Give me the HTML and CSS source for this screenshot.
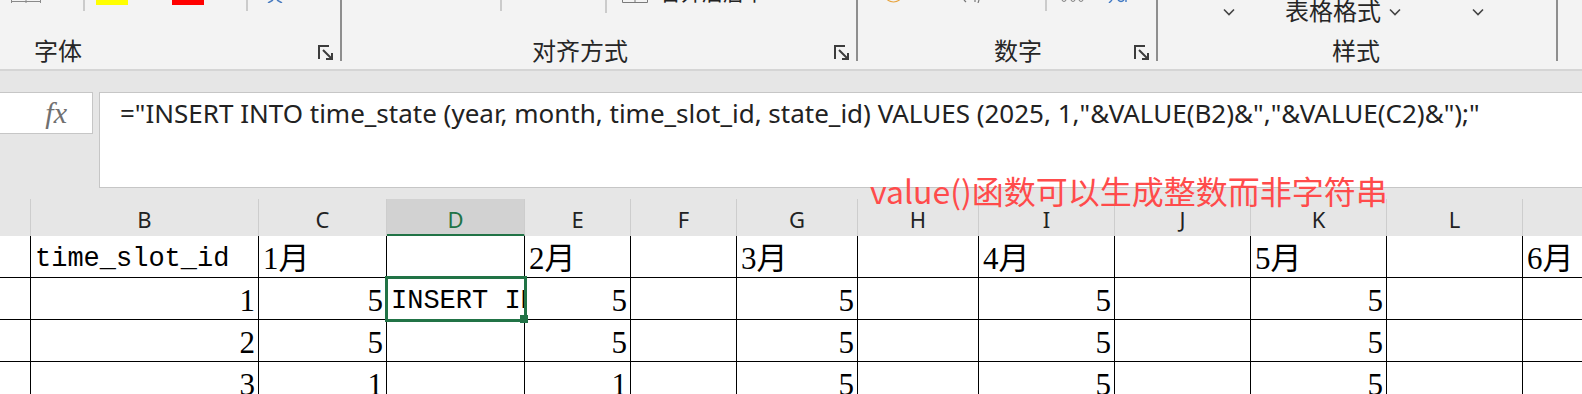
FILE: index.html
```html
<!DOCTYPE html>
<html lang="zh-CN">
<head>
    <meta charset="UTF-8">
    <meta name="viewport" content="width=device-width, initial-scale=1.0">
    <title>time_state - Excel</title>
    <link rel="stylesheet" href="styles.css">
</head>
<body>
    <!-- ribbon, scrolled so only the bottom of the tool rows shows -->
    <div class="ribbon">
        <div class="group g-font">
            <div class="tools">
                <svg class="t-border" width="30" height="3" viewBox="0 0 30 3"><path d="M0 1.5H30M0.5 0V3M15 0V3M29.5 0V3" stroke="#8a8a8a" stroke-width="1" fill="none"/></svg>
                <span class="tsep ts-1"></span>
                <span class="swatch yellow"></span>
                <span class="swatch red"></span>
                <span class="tsep ts-2"></span>
                <svg class="t-wen" width="16" height="3" viewBox="0 0 16 3"><path d="M1 3L6 0M10 0L15 3" stroke="#4a7cc0" stroke-width="1.5" fill="none"/></svg>
            </div>
            <div class="glabel">
                <span>字体</span>
                <svg class="launcher" width="16" height="16" viewBox="0 0 16 16"><path d="M1 14V1H11M5 5L14 14M8 14H14V8" stroke="#3c3c3c" stroke-width="2" fill="none"/></svg>
            </div>
        </div>
        <div class="group g-align">
            <div class="tools">
                <span class="tsep ts-3"></span>
                <span class="tsep ts-4"></span>
                <svg class="t-merge" width="26" height="3" viewBox="0 0 26 3"><path d="M0.5 0V2.5H25.5V0M13 0V2.5" stroke="#7a7a7a" stroke-width="1" fill="none"/></svg>
                <span class="t-text">合并后居中</span>
            </div>
            <div class="glabel">
                <span>对齐方式</span>
                <svg class="launcher" width="16" height="16" viewBox="0 0 16 16"><path d="M1 14V1H11M5 5L14 14M8 14H14V8" stroke="#3c3c3c" stroke-width="2" fill="none"/></svg>
            </div>
        </div>
        <div class="group g-number">
            <div class="tools">
                <svg class="t-coin" width="13" height="3" viewBox="0 0 13 3"><path d="M0.5 0Q6.5 4 12.5 0" stroke="#e8a33c" stroke-width="1.2" fill="none"/></svg>
                <svg class="t-pct" width="17" height="3" viewBox="0 0 17 3"><path d="M1 0L3 2M12 0V2M16 0L15 3" stroke="#777" stroke-width="1.2" fill="none"/></svg>
                <span class="tsep ts-5"></span>
                <svg class="t-dec" width="27" height="3" viewBox="0 0 27 3"><path d="M2 0Q4 3 6 0M11 0Q13 3 15 0M19 0Q21 3 23 0" stroke="#888" stroke-width="1.2" fill="none"/></svg>
                <svg class="t-dec2" width="22" height="3" viewBox="0 0 22 3"><path d="M1 3L4 0M10 0Q13 3 16 0M18 0V2" stroke="#3f78c4" stroke-width="1.4" fill="none"/></svg>
            </div>
            <div class="glabel">
                <span>数字</span>
                <svg class="launcher" width="16" height="16" viewBox="0 0 16 16"><path d="M1 14V1H11M5 5L14 14M8 14H14V8" stroke="#3c3c3c" stroke-width="2" fill="none"/></svg>
            </div>
        </div>
        <div class="group g-style">
            <div class="tools">
                <svg class="chev ch-1" width="12" height="8" viewBox="0 0 12 8"><path d="M1 1.5L6 6.5L11 1.5" stroke="#444" stroke-width="1.6" fill="none"/></svg>
                <span class="t-table">表格格式</span>
                <svg class="chev ch-2" width="12" height="8" viewBox="0 0 12 8"><path d="M1 1.5L6 6.5L11 1.5" stroke="#444" stroke-width="1.6" fill="none"/></svg>
                <svg class="chev ch-3" width="12" height="8" viewBox="0 0 12 8"><path d="M1 1.5L6 6.5L11 1.5" stroke="#444" stroke-width="1.6" fill="none"/></svg>
            </div>
            <div class="glabel">
                <span>样式</span>
            </div>
        </div>
        <div class="group g-rest"></div>
    </div>

    <div class="formula-bar">
        <div class="fx-box"><span class="fx">fx</span></div>
        <div class="formula-input">="INSERT INTO time_state (year, month, time_slot_id, state_id) VALUES (2025, 1,"&amp;VALUE(B2)&amp;","&amp;VALUE(C2)&amp;");"</div>
    </div>

    <div class="note">value()函数可以生成整数而非字符串</div>

    <div class="sheet">
        <div class="colhead">
            <span></span><span>B</span><span>C</span><span class="sel">D</span><span>E</span><span>F</span><span>G</span><span>H</span><span>I</span><span>J</span><span>K</span><span>L</span><span>M</span>
        </div>
        <div class="row">
            <div></div>
            <div class="mono">time_slot_id</div>
            <div>1月</div>
            <div></div>
            <div>2月</div>
            <div></div>
            <div>3月</div>
            <div></div>
            <div>4月</div>
            <div></div>
            <div>5月</div>
            <div></div>
            <div>6月</div>
        </div>
        <div class="row">
            <div></div>
            <div class="num">1</div>
            <div class="num">5</div>
            <div class="active"><span class="clip">INSERT INTO</span></div>
            <div class="num">5</div>
            <div></div>
            <div class="num">5</div>
            <div></div>
            <div class="num">5</div>
            <div></div>
            <div class="num">5</div>
            <div></div>
            <div></div>
        </div>
        <div class="row">
            <div></div>
            <div class="num">2</div>
            <div class="num">5</div>
            <div></div>
            <div class="num">5</div>
            <div></div>
            <div class="num">5</div>
            <div></div>
            <div class="num">5</div>
            <div></div>
            <div class="num">5</div>
            <div></div>
            <div></div>
        </div>
        <div class="row">
            <div></div>
            <div class="num">3</div>
            <div class="num">1</div>
            <div></div>
            <div class="num">1</div>
            <div></div>
            <div class="num">5</div>
            <div></div>
            <div class="num">5</div>
            <div></div>
            <div class="num">5</div>
            <div></div>
            <div></div>
        </div>
    </div>
</body>
</html>
```

FILE: styles.css
```css
body {
    margin: 0;
    width: 1582px;
    height: 394px;
    overflow: hidden;
    background-color: #e6e6e6;
    font-family: "Noto Sans", "Noto Sans CJK SC", sans-serif;
    color: #222;
}

/* ribbon */
.ribbon {
    display: flex;
    align-items: flex-start;
    height: 69px;
    background-color: #f3f3f3;
    border-bottom: 2px solid #d5d5d5;
    overflow: hidden;
}

.group {
    flex: none;
    display: flex;
    flex-direction: column;
    height: 61px;
    box-sizing: border-box;
    border-right: 2px solid #8e8e8e;
}

.g-font { width: 342px; }
.g-align { width: 516px; }
.g-number { width: 300px; }
.g-style { width: 400px; }
.g-rest { flex: 1; border-right: none; }

.tools {
    display: flex;
    align-items: flex-start;
    height: 38px;
    flex: none;
}

.glabel {
    display: flex;
    align-items: flex-start;
    height: 23px;
    font-family: "Noto Sans CJK SC", sans-serif;
    font-size: 24px;
    line-height: 24px;
    color: #262626;
}

.g-font .glabel { padding-left: 34px; }
.g-align .glabel { padding-left: 190px; }
.g-number .glabel { padding-left: 136px; }
.g-style .glabel { padding-left: 174px; }

.launcher {
    margin-left: auto;
    margin-right: 6px;
    margin-top: 7px;
}

.tsep {
    width: 2px;
    height: 11px;
    background-color: #cbcbcb;
}

.swatch {
    width: 32px;
    height: 5px;
}
.yellow { background-color: #ffff00; margin-left: 11px; }
.red { background-color: #ff0000; margin-left: 44px; }

.t-border { margin-left: 11px; }
.ts-1 { margin-left: 42px; }
.ts-2 { margin-left: 42px; }
.t-wen { margin-left: 19px; }

.ts-3 { margin-left: 158px; }
.ts-4 { margin-left: 103px; height: 13px; }
.t-merge { margin-left: 15px; }
.t-text {
    margin-left: 12px;
    margin-top: -19px;
    font-family: "Noto Sans CJK SC", sans-serif;
    font-size: 21px;
    line-height: 21px;
}

.t-coin { margin-left: 29px; }
.t-pct { margin-left: 63px; }
.ts-5 { margin-left: 65px; }
.t-dec { margin-left: 13px; }
.t-dec2 { margin-left: 21px; }

.chev { margin-top: 8px; }
.ch-1 { margin-left: 65px; }
.t-table {
    margin-left: 50px;
    margin-top: -2px;
    font-family: "Noto Sans CJK SC", sans-serif;
    font-size: 24px;
    line-height: 24px;
    color: #262626;
}
.ch-2 { margin-left: 8px; }
.ch-3 { margin-left: 71px; }

/* formula bar */
.formula-bar {
    display: flex;
    align-items: flex-start;
    gap: 6px;
    height: 128px;
    padding-top: 21px;
    box-sizing: border-box;
}

.fx-box {
    flex: none;
    width: 94px;
    height: 42px;
    margin-left: -1px;
    box-sizing: border-box;
    background-color: #fff;
    border: 1px solid #c6c6c6;
    display: flex;
    align-items: center;
    justify-content: flex-end;
    padding-right: 25px;
}

.fx {
    font-family: "Liberation Serif", serif;
    font-style: italic;
    font-size: 30px;
    line-height: 30px;
    color: #707070;
}

.formula-input {
    flex: 1;
    height: 96px;
    box-sizing: border-box;
    background-color: #fff;
    border: 1px solid #c6c6c6;
    border-right: none;
    padding: 3px 0 0 20px;
    font-family: "Noto Sans", sans-serif;
    font-size: 26px;
    line-height: 35px;
    color: #222;
    white-space: nowrap;
    overflow: hidden;
}

.note {
    position: absolute;
    left: 870px;
    top: 174px;
    font-family: "Noto Sans CJK SC", sans-serif;
    font-size: 32px;
    line-height: 32px;
    color: #ff4b4b;
    white-space: nowrap;
}

/* sheet grid */
.sheet {
    --cols: 31px 228px 128px 138px 106px 106px 121px 121px 136px 136px 136px 136px 136px;
}

.colhead {
    display: grid;
    grid-template-columns: var(--cols);
    height: 37px;
}

.colhead span {
    box-sizing: border-box;
    border-right: 1px solid #cdcdcd;
    border-bottom: 1px solid #a9a9a9;
    padding-top: 6px;
    text-align: center;
    font-size: 22px;
    line-height: 29px;
    color: #222;
}

.colhead .sel {
    background-color: #d2d2d2;
    color: #217346;
    border-bottom: 3px solid #217346;
}

.row {
    display: grid;
    grid-template-columns: var(--cols);
    height: 42px;
}

.row > div {
    min-width: 0;
    box-sizing: border-box;
    display: flex;
    align-items: flex-end;
    padding: 0 4px 2px;
    background-color: #fff;
    border-right: 1px solid #000;
    border-bottom: 1px solid #000;
    font-family: "Liberation Serif", "Noto Sans CJK SC", serif;
    font-size: 31px;
    line-height: 32px;
    color: #000;
    white-space: nowrap;
    overflow: hidden;
}

.row > .num {
    justify-content: flex-end;
    padding-right: 3px;
}

.row > .mono,
.row .clip {
    font-family: "Liberation Mono", monospace;
    font-size: 27px;
}

.row > .active {
    position: relative;
    overflow: visible;
    padding-right: 0;
}

.clip {
    flex: 1;
    min-width: 0;
    overflow: hidden;
}

.active::after {
    content: "";
    position: absolute;
    left: -2px;
    top: -2px;
    right: -3px;
    bottom: -3px;
    border: 3px solid #217346;
}

.active::before {
    content: "";
    position: absolute;
    right: -4px;
    bottom: -4px;
    width: 8px;
    height: 8px;
    background-color: #217346;
    z-index: 1;
}
```
